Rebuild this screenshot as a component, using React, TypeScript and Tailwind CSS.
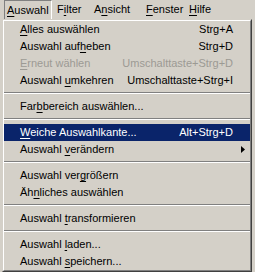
import React from 'react';

type Item =
  | { sep: true }
  | { label: React.ReactNode; shortcut?: string; disabled?: boolean; active?: boolean; submenu?: boolean; sep?: false };

const U = ({ children }: { children: React.ReactNode }) => <span className="underline underline-offset-2">{children}</span>;

const items: Item[] = [
  { label: <><U>A</U>lles auswählen</>, shortcut: 'Strg+A' },
  { label: <>Auswahl auf<U>h</U>eben</>, shortcut: 'Strg+D' },
  { label: <><U>E</U>rneut wählen</>, shortcut: 'Umschalttaste+Strg+D', disabled: true },
  { label: <>Auswahl <U>u</U>mkehren</>, shortcut: 'Umschalttaste+Strg+I' },
  { sep: true },
  { label: <>Far<U>b</U>bereich auswählen...</> },
  { sep: true },
  { label: <><U>W</U>eiche Auswahlkante...</>, shortcut: 'Alt+Strg+D', active: true },
  { label: <>Auswahl <U>v</U>erändern</>, submenu: true },
  { sep: true },
  { label: <>Auswahl ver<U>g</U>rößern</> },
  { label: <>Äh<U>n</U>liches auswählen</> },
  { sep: true },
  { label: <>Auswahl <U>t</U>ransformieren</> },
  { sep: true },
  { label: <>Auswahl <U>l</U>aden...</> },
  { label: <>Auswahl <U>s</U>peichern...</> },
];

export default function App() {
  return (
    <div className="w-[255px] h-[272px] bg-[#d4d0c8] overflow-hidden text-[11px] text-black" style={{ fontFamily: '"Liberation Sans", Arial, sans-serif' }}>
      {/* Menu bar */}
      <div className="flex h-[19px] pl-[4px]">
        <div className="flex items-center w-[48px] h-full pl-[2px] border-t border-l border-[#808080] border-r border-r-white">
          <U>A</U>uswahl
        </div>
        <div className="flex items-center w-[39px] h-full pl-[5px]">
          F<U>i</U>lter
        </div>
        <div className="flex items-center w-[52px] h-full pl-[3px]">
          A<U>n</U>sicht
        </div>
        <div className="flex items-center w-[43px] h-full pl-[3px]">
          <U>F</U>enster
        </div>
        <div className="flex items-center h-full pl-[3px]">
          <U>H</U>ilfe
        </div>
      </div>

      {/* Dropdown */}
      <div className="ml-[2px] w-[250px] border border-t-[#d4d0c8] border-l-[#d4d0c8] border-r-[#404040] border-b-[#404040]">
        <div className="border border-t-white border-l-white border-r-[#808080] border-b-[#808080]">
          {items.map((it, i) =>
            it.sep ? (
              <div key={i} className="pt-[3px] pb-[4px]">
                <div className="border-t border-[#808080] border-b border-b-white" />
              </div>
            ) : (
              <div
                key={i}
                className={`flex items-center h-[17px] pl-[16px] pr-[17px] ${it.active ? 'bg-[#0a246a] text-white' : ''} ${it.disabled ? 'text-[#9c9a94]' : ''}`}
              >
                <span className="flex-1 whitespace-nowrap">{it.label}</span>
                {it.shortcut && <span className="whitespace-nowrap">{it.shortcut}</span>}
                {it.submenu && (
                  <svg width="4" height="7" viewBox="0 0 4 7" className="-mr-[12px]">
                    <path d="M0 0 L4 3.5 L0 7 Z" fill="#000" />
                  </svg>
                )}
              </div>
            )
          )}
        </div>
      </div>
    </div>
  );
}
